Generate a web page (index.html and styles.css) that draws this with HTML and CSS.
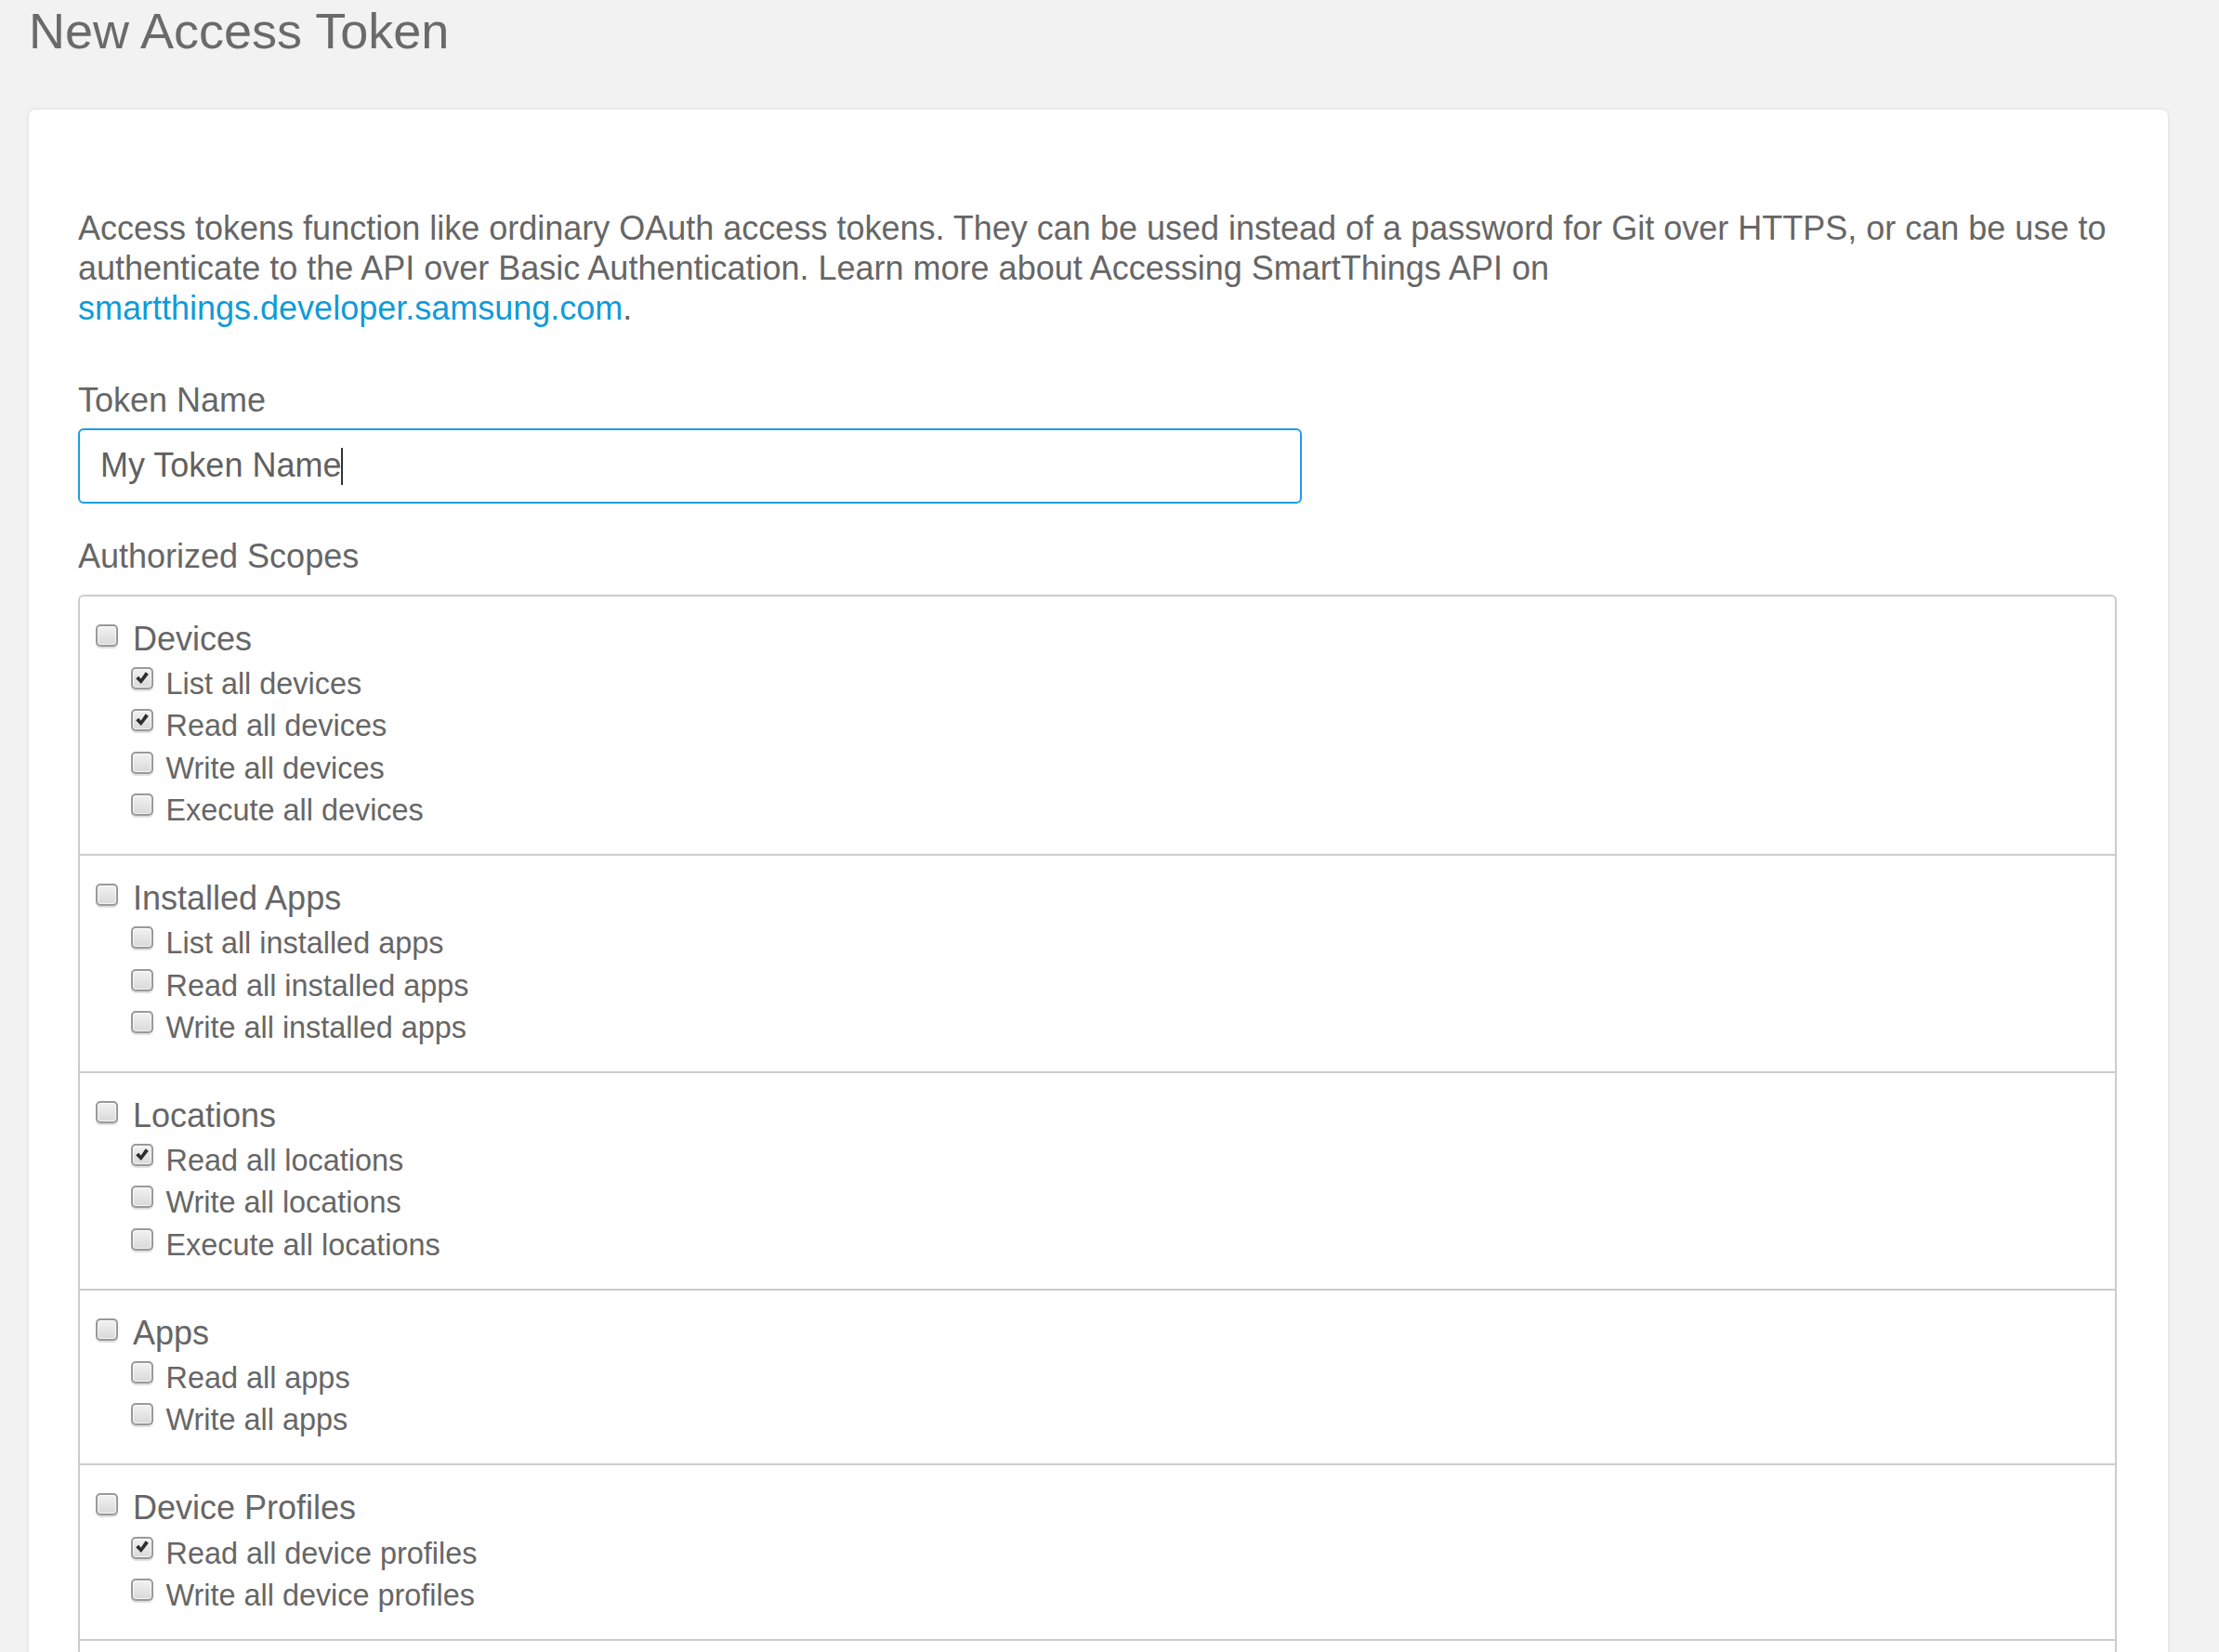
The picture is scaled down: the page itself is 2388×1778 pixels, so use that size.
FILE: index.html
```html
<!DOCTYPE html>
<html lang="en">
<head>
<meta charset="utf-8">
<title>New Access Token</title>
<link rel="stylesheet" href="styles.css">
</head>
<body>
<div class="page">
  <h1 class="page-title">New Access Token</h1>
  <div class="card">
    <p class="intro">Access tokens function like ordinary OAuth access tokens. They can be used instead of a password for Git over HTTPS, or can be use to authenticate to the API over Basic Authentication. Learn more about Accessing SmartThings API on<br><a class="link" href="#">smartthings.developer.samsung.com</a>.</p>

    <div class="field-label">Token Name</div>
    <div class="text-input" role="textbox">My Token Name<span class="caret"></span></div>

    <div class="field-label scopes-label">Authorized Scopes</div>
    <div class="scopes">
      <div class="group">
        <div class="row title-row"><span class="cb"></span><span class="title">Devices</span></div>
        <div class="row item-row"><span class="cb checked"><svg viewBox="0 0 24 24"><path d="M3.8 12.4 L7.6 9.4 L10.3 12.9 L16.4 3.9 L20.2 6.8 L10.6 19.2 Z"/></svg></span><span>List all devices</span></div>
        <div class="row item-row"><span class="cb checked"><svg viewBox="0 0 24 24"><path d="M3.8 12.4 L7.6 9.4 L10.3 12.9 L16.4 3.9 L20.2 6.8 L10.6 19.2 Z"/></svg></span><span>Read all devices</span></div>
        <div class="row item-row"><span class="cb"></span><span>Write all devices</span></div>
        <div class="row item-row"><span class="cb"></span><span>Execute all devices</span></div>
      </div>
      <div class="group">
        <div class="row title-row"><span class="cb"></span><span class="title">Installed Apps</span></div>
        <div class="row item-row"><span class="cb"></span><span>List all installed apps</span></div>
        <div class="row item-row"><span class="cb"></span><span>Read all installed apps</span></div>
        <div class="row item-row"><span class="cb"></span><span>Write all installed apps</span></div>
      </div>
      <div class="group">
        <div class="row title-row"><span class="cb"></span><span class="title">Locations</span></div>
        <div class="row item-row"><span class="cb checked"><svg viewBox="0 0 24 24"><path d="M3.8 12.4 L7.6 9.4 L10.3 12.9 L16.4 3.9 L20.2 6.8 L10.6 19.2 Z"/></svg></span><span>Read all locations</span></div>
        <div class="row item-row"><span class="cb"></span><span>Write all locations</span></div>
        <div class="row item-row"><span class="cb"></span><span>Execute all locations</span></div>
      </div>
      <div class="group">
        <div class="row title-row"><span class="cb"></span><span class="title">Apps</span></div>
        <div class="row item-row"><span class="cb"></span><span>Read all apps</span></div>
        <div class="row item-row"><span class="cb"></span><span>Write all apps</span></div>
      </div>
      <div class="group">
        <div class="row title-row"><span class="cb"></span><span class="title">Device Profiles</span></div>
        <div class="row item-row"><span class="cb checked"><svg viewBox="0 0 24 24"><path d="M3.8 12.4 L7.6 9.4 L10.3 12.9 L16.4 3.9 L20.2 6.8 L10.6 19.2 Z"/></svg></span><span>Read all device profiles</span></div>
        <div class="row item-row"><span class="cb"></span><span>Write all device profiles</span></div>
      </div>
      <div class="group group-more"></div>
    </div>
  </div>
</div>
</body>
</html>
```

FILE: styles.css
```css
html, body {
  margin: 0;
  padding: 0;
  background: #f2f2f2;
}

body {
  font-family: "Liberation Sans", Arial, sans-serif;
  color: #666666;
}

.page {
  padding: 0 55px 0 31px;
}

.page-title {
  margin: 0;
  padding-top: 2px;
  font-size: 54px;
  font-weight: normal;
  line-height: 63.6px;
  color: #6a6a6a;
}

.card {
  margin-top: 52px;
  background: #ffffff;
  border-radius: 7px;
  box-shadow: 0 0 4px rgba(0, 0, 0, 0.10);
  padding: 106px 55px 0 53px;
  min-height: 1700px;
}

.intro {
  margin: 0;
  font-size: 36px;
  line-height: 43.3px;
}

.link {
  color: #0f9bd8;
  text-decoration: none;
}

.field-label {
  margin-top: 56.5px;
  font-size: 36px;
  line-height: 42px;
}

.text-input {
  margin-top: 9.5px;
  width: 1317px;
  height: 81px;
  box-sizing: border-box;
  border: 2px solid #1c9de4;
  border-radius: 6px;
  padding: 0 22px 2px 22px;
  font-size: 36px;
  line-height: 75px;
  color: #606060;
}

.caret {
  display: inline-block;
  width: 2px;
  height: 40px;
  background: #333333;
  vertical-align: -9px;
}

.scopes-label {
  margin-top: 36px;
}

.scopes {
  margin-top: 19.5px;
  border: 2px solid #cccccc;
  border-bottom: none;
  border-radius: 6px 6px 0 0;
}

.group {
  padding: 20px 0 24px 17px;
}

.group + .group {
  border-top: 2px solid #cccccc;
}

.group-more {
  height: 120px;
}

.row {
  display: flex;
  align-items: flex-start;
}

.title-row {
  height: 52.3px;
  font-size: 36px;
  line-height: 52.3px;
}

.title-row .cb {
  margin-top: 10px;
  margin-right: 16px;
}

.item-row {
  height: 45.2px;
  font-size: 32.4px;
  line-height: 45.2px;
  padding-left: 37.5px;
}

.item-row .cb {
  margin-top: 4px;
  margin-right: 14px;
}

.cb {
  flex: none;
  width: 24px;
  height: 24px;
  box-sizing: border-box;
  border: 2px solid #999999;
  border-radius: 5px;
  background: linear-gradient(#f2f2f2, #d9d9d9);
  box-shadow: inset 0 0 0 1px rgba(255, 255, 255, 0.7), 0 2px 1px rgba(0, 0, 0, 0.13);
  display: flex;
  align-items: center;
  justify-content: center;
}

.cb svg {
  width: 22px;
  height: 22px;
  margin-top: -1px;
}

.cb svg path {
  fill: #2e2e2e;
}
```
